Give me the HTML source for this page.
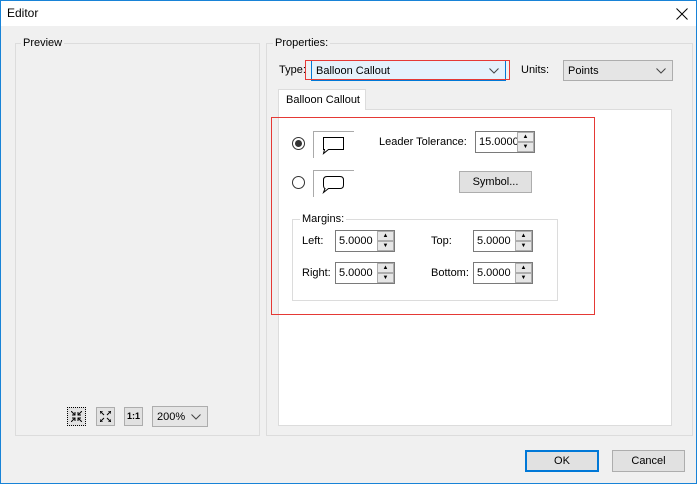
<!DOCTYPE html><html><head><style>
body{margin:0;width:699px;height:486px;background:#fff;font-family:"Liberation Sans",sans-serif;font-size:11px;color:#000;position:relative;overflow:hidden}
div,span{position:absolute;box-sizing:border-box;white-space:nowrap}
.win{left:0;top:0;width:697px;height:484px;border:1px solid #1883d7;background:#f0f0f0}
.title{left:0;top:0;width:695px;height:25px;background:#fff}
.grp{border:1px solid #dcdcdc}
.lbl{background:#f0f0f0;padding:0 2px}
.combo{border:1px solid #adadad;background:#e5e5e5;padding:4px 4px}
.spin{background:#fff;border:1px solid #7a7a7a;height:22px;overflow:hidden}
.spin .t{left:3px;top:4px;font-size:11px}
.sb{right:0;width:17px;height:10px;background:#e6e6e6;border:1px solid #adadad;font-size:6px;text-align:center;line-height:8px}
.btn{background:#e1e1e1;border:1px solid #adadad;text-align:center}
.radio{width:13px;height:13px;border:1px solid #333;border-radius:50%;background:#fff}
.chev{position:absolute;right:6px;top:7px}
</style></head><body>
<div class="win">
<div class="title"></div>
<span style="left:6px;top:5px;font-size:12px">Editor</span>
<svg style="position:absolute;left:675px;top:7px" width="12" height="12"><path d="M0.5 0.5L11.5 11.5M11.5 0.5L0.5 11.5" stroke="#000" stroke-width="1"/></svg>
</div>
<div class="grp" style="left:15px;top:43px;width:245px;height:393px"></div>
<span class="lbl" style="left:21px;top:37px">Preview</span>
<div class="grp" style="left:266px;top:43px;width:427px;height:393px"></div>
<span class="lbl" style="left:273px;top:37px">Properties:</span>
<span style="left:279px;top:64px">Type:</span>
<div class="combo" style="left:311px;top:60px;width:195px;height:21px;background:#e5f1fb;border:1px solid #0078d7">Balloon Callout<svg class="chev" width="10" height="6"><path d="M0.5 0.5L5 5L9.5 0.5" fill="none" stroke="#444"/></svg></div>
<div style="left:305px;top:60px;width:205px;height:20px;border:1px solid #e53935"></div>
<span style="left:521px;top:64px">Units:</span>
<div class="combo" style="left:563px;top:60px;width:110px;height:21px">Points<svg class="chev" width="10" height="6"><path d="M0.5 0.5L5 5L9.5 0.5" fill="none" stroke="#444"/></svg></div>
<div style="left:278px;top:109px;width:394px;height:317px;background:#fff;border:1px solid #dcdcdc"></div>
<div style="left:278px;top:89px;width:88px;height:21px;background:#fff;border:1px solid #dcdcdc;border-bottom:none;padding:4px 7px">Balloon Callout</div>
<div style="left:271px;top:117px;width:324px;height:198px;border:1px solid #e53935"></div>
<div class="radio" style="left:292px;top:137px"><span style="left:2px;top:2px;width:7px;height:7px;border-radius:50%;background:#333"></span></div>
<div style="left:313px;top:131px;width:41px;height:27px;border-left:1px solid #aaa;border-top:1px solid #aaa"></div>
<svg style="position:absolute;left:318px;top:134px" width="30" height="22"><path d="M5.5 3.5H25.5V15.5H10.5L5.5 19.5L6.5 15.5H5.5Z" fill="none" stroke="#000"/></svg>
<span style="left:379px;top:136px">Leader Tolerance:</span>
<div class="spin" style="left:475px;top:131px;width:60px"><span class="t">15.0000</span><div class="sb" style="top:0;background:#eee">▲</div><div class="sb" style="top:10px">▼</div></div>
<div class="radio" style="left:292px;top:176px"></div>
<div style="left:313px;top:170px;width:41px;height:27px;border-left:1px solid #aaa;border-top:1px solid #aaa"></div>
<svg style="position:absolute;left:318px;top:173px" width="30" height="22"><path d="M9 3.5H22Q25.5 3.5 25.5 7V12Q25.5 15.5 22 15.5H10.5L5.5 19.5L7 15.5Q5.5 15 5.5 12V7Q5.5 3.5 9 3.5Z" fill="none" stroke="#000"/></svg>
<div class="btn" style="left:459px;top:171px;width:73px;height:22px;padding-top:4px">Symbol...</div>
<div class="grp" style="left:292px;top:219px;width:266px;height:82px"></div>
<span style="left:300px;top:213px;background:#fff;padding:0 2px">Margins:</span>
<span style="left:302px;top:235px">Left:</span>
<span style="left:302px;top:267px">Right:</span>
<span style="left:431px;top:235px">Top:</span>
<span style="left:431px;top:267px">Bottom:</span>
<div class="spin" style="left:335px;top:230px;width:60px"><span class="t">5.0000</span><div class="sb" style="top:0">▲</div><div class="sb" style="top:10px">▼</div></div>
<div class="spin" style="left:473px;top:230px;width:60px"><span class="t">5.0000</span><div class="sb" style="top:0">▲</div><div class="sb" style="top:10px">▼</div></div>
<div class="spin" style="left:335px;top:262px;width:60px"><span class="t">5.0000</span><div class="sb" style="top:0">▲</div><div class="sb" style="top:10px">▼</div></div>
<div class="spin" style="left:473px;top:262px;width:60px"><span class="t">5.0000</span><div class="sb" style="top:0">▲</div><div class="sb" style="top:10px">▼</div></div>
<div class="btn" style="left:67px;top:407px;width:19px;height:19px;border:1px dotted #000"><svg style="position:absolute;left:3px;top:3px" width="11" height="11"><path d="M0 0L4 4M4 1V4H1M11 0L7 4M7 1V4H10M0 11L4 7M1 7H4V10M11 11L7 7M10 7H7V10" stroke="#000" fill="none"/></svg></div>
<div class="btn" style="left:96px;top:407px;width:19px;height:19px"><svg style="position:absolute;left:3px;top:3px" width="11" height="11"><path d="M0 0L4 4M0 3V0H3M11 0L7 4M8 0H11V3M0 11L4 7M0 8V11H3M11 11L7 7M11 8V11H8" stroke="#000" fill="none"/></svg></div>
<div class="btn" style="left:124px;top:407px;width:19px;height:19px;font-size:9px;font-weight:bold;padding-top:3px">1:1</div>
<div class="combo" style="left:152px;top:406px;width:56px;height:21px">200%<svg class="chev" width="10" height="6"><path d="M0.5 0.5L5 5L9.5 0.5" fill="none" stroke="#444"/></svg></div>
<div class="btn" style="left:525px;top:450px;width:74px;height:22px;border:2px solid #0078d7;padding-top:3px">OK</div>
<div class="btn" style="left:612px;top:450px;width:73px;height:22px;padding-top:4px">Cancel</div>
</body></html>
